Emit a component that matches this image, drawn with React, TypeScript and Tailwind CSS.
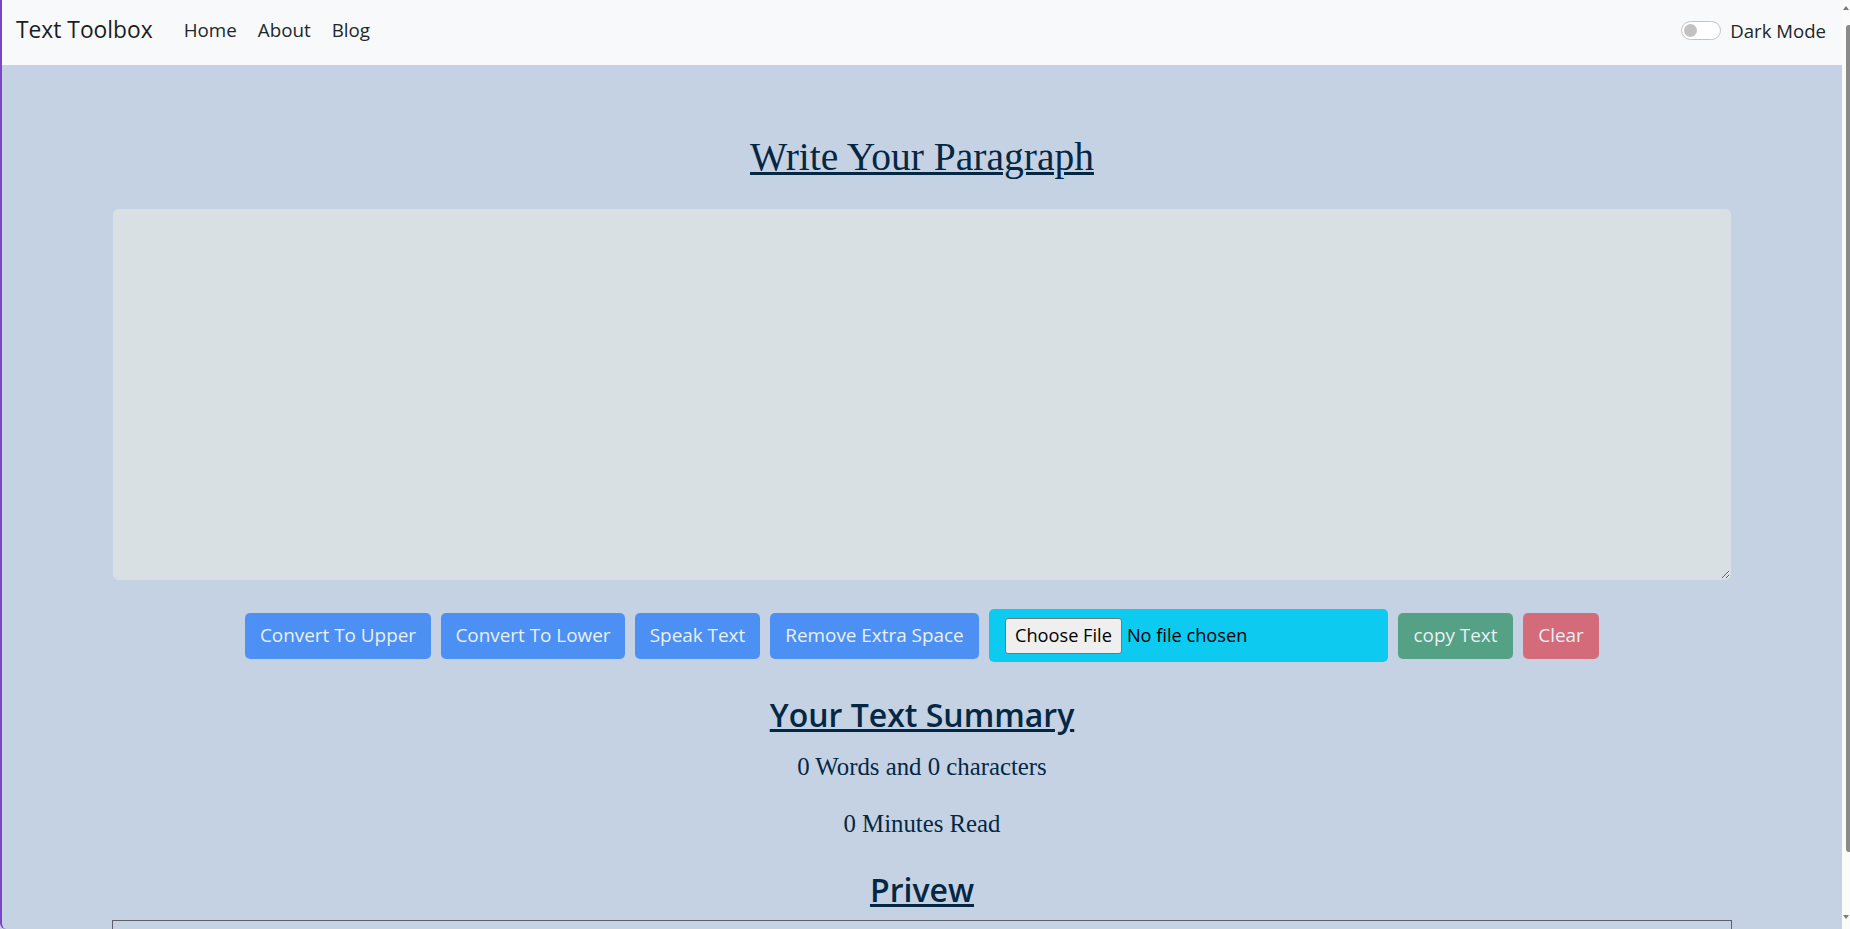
import { useState } from "react";

const sans = "font-['Open_Sans','Noto_Sans',sans-serif]";
const serif = "font-['Liberation_Serif','Times_New_Roman',serif]";

function Navbar() {
  return (
    <nav className={`h-[65px] shrink-0 bg-[#f8f9fa] flex items-center pl-[14px] pr-[16px] pb-[4px] ${sans}`}>
      <span className="text-[22.8px] text-[#1b1e21] mr-[31px]">Text Toolbox</span>
      <ul className="flex items-center gap-[21px] text-[18.8px] text-[#23272b]">
        <li>Home</li>
        <li>About</li>
        <li>Blog</li>
      </ul>
      <div className="ml-auto flex items-center gap-[9px]">
        <span className="w-[40px] h-[19px] rounded-full border border-[#c4c4c4] bg-white flex items-center px-[2px]">
          <span className="w-[13px] h-[13px] rounded-full bg-[#c2c2c2]" />
        </span>
        <span className="text-[18.6px] text-[#212529]">Dark Mode</span>
      </div>
    </nav>
  );
}

function Btn({ label, color, width }: { label: string; color: string; width: string }) {
  return (
    <button
      type="button"
      disabled
      className={`${color} ${width} h-[46px] rounded-[5px] text-white text-[18.9px] opacity-65 whitespace-nowrap ${sans}`}
    >
      {label}
    </button>
  );
}

function Scrollbar() {
  return (
    <div className="w-[8px] h-full bg-[#fbfbfb] relative">
      <div className="absolute left-[1px] top-[6px] w-0 h-0 border-l-[3px] border-r-[3px] border-b-[4px] border-l-transparent border-r-transparent border-b-[#7a7a7a]" />
      <div className="absolute right-0 top-[25px] w-[4px] h-[827px] rounded-l-[3px] bg-[#8a8a8a]" />
      <div className="absolute left-[1px] top-[915px] w-0 h-0 border-l-[3px] border-r-[3px] border-t-[4px] border-l-transparent border-r-transparent border-t-[#7a7a7a]" />
    </div>
  );
}

export default function App() {
  const [text, setText] = useState("");

  return (
    <div className="flex w-full h-[929px] overflow-hidden bg-[#c5d2e3]">
      <div className="flex-1 border-l-2 border-[#7d45c6] rounded-bl-[6px] flex flex-col">
        <Navbar />
        <main className="shrink-0 w-[1618px] mx-auto pt-[69px] text-[#042743]">
          <h1 className={`text-[39.5px] leading-[47px] text-center underline decoration-[3px] mb-[28px] ${serif}`}>
            Write Your Paragraph
          </h1>
          <textarea
            value={text}
            onChange={(e) => setText(e.target.value)}
            className="block w-full h-[371px] rounded-[5px] bg-[#d9e0e4] border border-[#d9e0e4] outline-none p-3"
          />
          <div className="mt-[29px] flex justify-center items-center gap-[10px]">
            <Btn label="Convert To Upper" color="bg-[#0d6efd]" width="w-[186px]" />
            <Btn label="Convert To Lower" color="bg-[#0d6efd]" width="w-[184px]" />
            <Btn label="Speak Text" color="bg-[#0d6efd]" width="w-[125px]" />
            <Btn label="Remove Extra Space" color="bg-[#0d6efd]" width="w-[209px]" />
            <div className={`w-[399px] h-[53px] rounded-[5px] bg-[#0dcaf0] flex items-center pl-[16px] ${sans}`}>
              <span className="h-[36px] px-[9px] flex items-center bg-[#efefef] border border-[#767676] rounded-[3px] text-[18.2px] text-black">
                Choose File
              </span>
              <span className="ml-[5px] text-[18.2px] text-black">No file chosen</span>
            </div>
            <Btn label="copy Text" color="bg-[#198754]" width="w-[115px]" />
            <Btn label="Clear" color="bg-[#dc3545]" width="w-[76px]" />
          </div>
          <h2 className={`mt-[33px] text-[32px] leading-[40px] font-semibold text-center underline decoration-[3px] ${sans}`}>
            Your Text Summary
          </h2>
          <p className={`mt-[13px] text-[24.8px] leading-[37px] text-center ${serif}`}>
            0 Words and 0 characters
          </p>
          <p className={`mt-[20px] text-[24.8px] leading-[37px] text-center ${serif}`}>
            0 Minutes Read
          </p>
          <h2 className={`mt-[28px] text-[32px] leading-[40px] font-semibold text-center underline decoration-[3px] ${sans}`}>
            Privew
          </h2>
          <div className="mt-[10px] w-[1620px] -ml-[1px] h-[200px] border border-[#5f5f6b]" />
        </main>
      </div>
      <Scrollbar />
    </div>
  );
}
